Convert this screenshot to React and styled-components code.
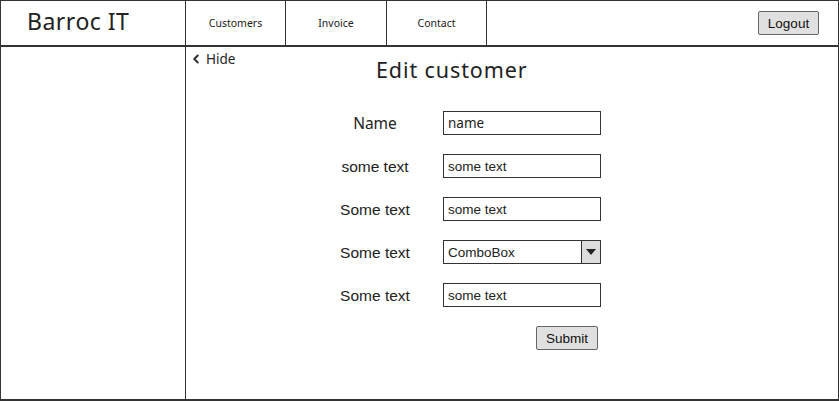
import React from 'react'
import styled, { createGlobalStyle } from 'styled-components'
import { ChevronLeft } from 'lucide-react'

const GlobalStyle = createGlobalStyle`
  * { box-sizing: border-box; }
  body {
    margin: 0;
    background: #fff;
    font-family: "Noto Sans", sans-serif;
    color: #222;
  }
`

const sketchFont = `"Noto Sans", "DejaVu Sans", sans-serif`
const plainFont = `"Liberation Sans", Arial, sans-serif`

const Frame = styled.div`
  width: 839px;
  height: 401px;
  border: 1px solid #333;
  border-bottom-width: 2px;
  display: flex;
  flex-direction: column;
`

const Header = styled.header`
  height: 46px;
  display: flex;
  align-items: stretch;
  border-bottom: 2px solid #333;
`

const Logo = styled.div`
  width: 185px;
  border-right: 1px solid #333;
  padding: 4px 0 0 26px;
  font-family: ${sketchFont};
  font-size: 23px;
  letter-spacing: 0.5px;
  color: #222;
`

const NavItem = styled.div`
  width: ${(p) => p.w}px;
  border-right: 1px solid #333;
  display: flex;
  align-items: center;
  justify-content: center;
  font-family: ${sketchFont};
  font-size: 10.5px;
  color: #222;
`

const Spacer = styled.div`
  flex: 1;
`

const HeaderActions = styled.div`
  display: flex;
  align-items: flex-start;
  padding: 10px 19px 0 0;
`

const Button = styled.button`
  width: ${(p) => p.w}px;
  height: 24px;
  background: #e0e0e0;
  border: 1px solid #666;
  border-radius: 2px;
  font-family: ${plainFont};
  font-size: 13.5px;
  color: #111;
  padding: 0;
`

const Body = styled.div`
  flex: 1;
  display: flex;
`

const Sidebar = styled.aside`
  width: 185px;
  border-right: 1px solid #333;
`

const Content = styled.main`
  flex: 1;
  display: flex;
  flex-direction: column;
`

const TopRow = styled.div`
  display: flex;
  align-items: flex-start;
`

const HideLink = styled.div`
  display: flex;
  align-items: center;
  gap: 3px;
  padding: 3px 0 0 3px;
  font-family: ${sketchFont};
  font-size: 13.5px;
  color: #222;
  width: 190px;
`

const Title = styled.h1`
  margin: 8px 0 0 0;
  font-family: ${sketchFont};
  font-weight: 400;
  font-size: 21.5px;
  letter-spacing: 0.9px;
  color: #222;
`

const Form = styled.div`
  margin: 27px 0 0 144px;
  display: grid;
  grid-template-columns: 90px 158px;
  column-gap: 23px;
  row-gap: 19px;
  align-items: center;
`

const Label = styled.div`
  text-align: center;
  font-family: ${(p) => (p.sketch ? sketchFont : plainFont)};
  font-size: 15.5px;
  color: #222;
  padding-top: ${(p) => (p.sketch ? 0 : 2)}px;
`

const Field = styled.div`
  height: 24px;
  border: 1px solid #333;
  background: #fff;
  display: flex;
  align-items: center;
  padding-left: 4px;
  font-family: ${(p) => (p.sketch ? sketchFont : plainFont)};
  font-size: 13.5px;
  color: #222;
`

const Combo = styled(Field)`
  padding-left: 0;
  span {
    flex: 1;
    padding-left: 4px;
  }
`

const ComboArrow = styled.div`
  width: 19px;
  height: 100%;
  border-left: 1px solid #333;
  background: #dcdcdc;
  display: flex;
  align-items: center;
  justify-content: center;
`

const SubmitCell = styled.div`
  grid-column: 2;
  display: flex;
  justify-content: flex-end;
  padding-right: 3px;
`

const rows = [
  { label: 'Name', value: 'name', sketch: true },
  { label: 'some text', value: 'some text' },
  { label: 'Some text', value: 'some text' },
  { label: 'Some text', combo: 'ComboBox' },
  { label: 'Some text', value: 'some text' },
]

export default function App() {
  return (
    <>
      <GlobalStyle />
      <Frame>
        <Header>
          <Logo>Barroc IT</Logo>
          <NavItem w={100}>Customers</NavItem>
          <NavItem w={101}>Invoice</NavItem>
          <NavItem w={100}>Contact</NavItem>
          <Spacer />
          <HeaderActions>
            <Button w={61}>Logout</Button>
          </HeaderActions>
        </Header>
        <Body>
          <Sidebar />
          <Content>
            <TopRow>
              <HideLink>
                <ChevronLeft size={14} strokeWidth={3.5} color="#333" />
                Hide
              </HideLink>
              <Title>Edit customer</Title>
            </TopRow>
            <Form>
              {rows.map((r, i) => (
                <React.Fragment key={i}>
                  <Label sketch={r.sketch}>{r.label}</Label>
                  {r.combo ? (
                    <Combo>
                      <span>{r.combo}</span>
                      <ComboArrow>
                        <svg width="10" height="6" viewBox="0 0 10 6">
                          <path d="M0 0 L10 0 L5 6 Z" fill="#222" />
                        </svg>
                      </ComboArrow>
                    </Combo>
                  ) : (
                    <Field sketch={r.sketch}>{r.value}</Field>
                  )}
                </React.Fragment>
              ))}
              <SubmitCell>
                <Button w={62}>Submit</Button>
              </SubmitCell>
            </Form>
          </Content>
        </Body>
      </Frame>
    </>
  )
}
